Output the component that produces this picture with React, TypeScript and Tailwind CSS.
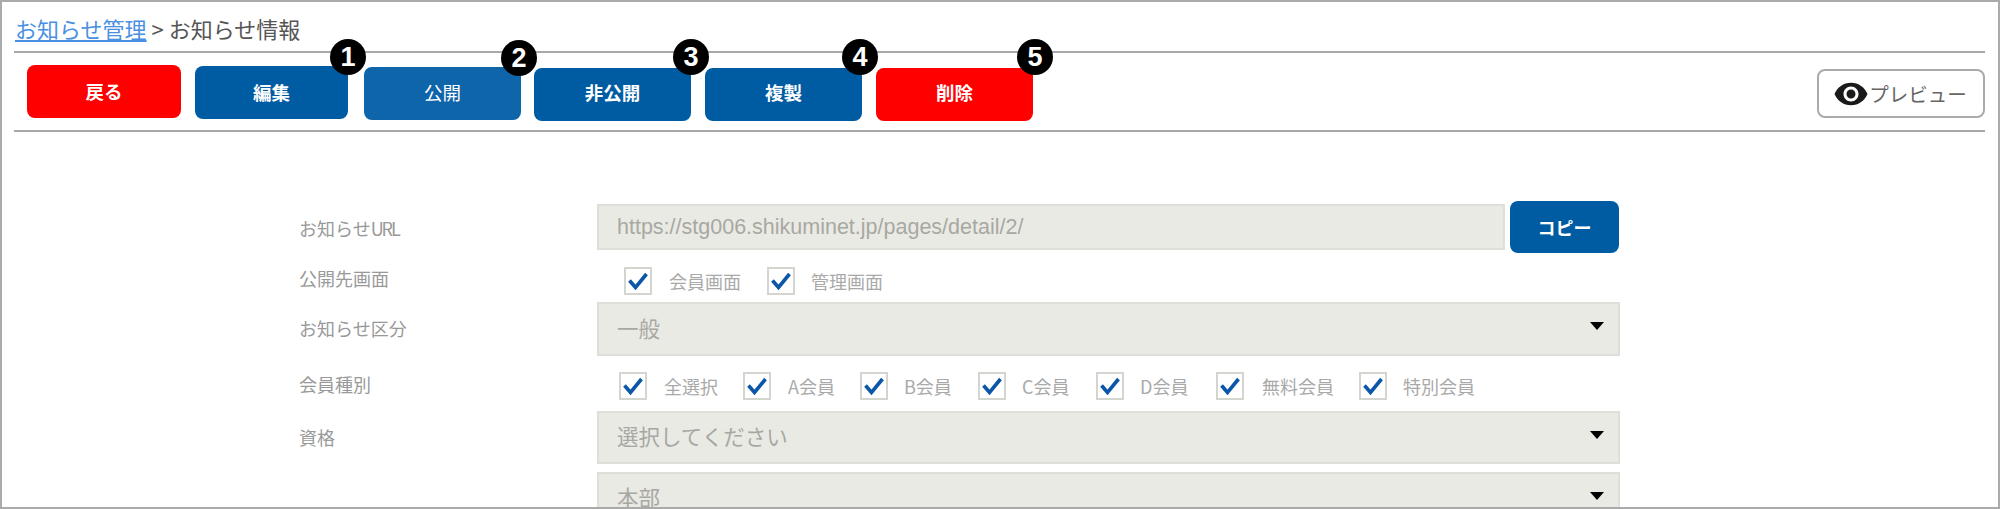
import { MdVisibility } from 'react-icons/md'

const jp = "font-['Noto_Sans_CJK_JP','Noto_Sans',sans-serif]"

function Badge({ n, pos }: { n: number; pos: string }) {
  return (
    <span className={`absolute w-9 h-9 rounded-full bg-black text-white text-[27px] leading-9 font-bold text-center font-['Liberation_Sans',sans-serif] ${pos}`}>
      {n}
    </span>
  )
}

type ActionProps = { label: string; color: string; box: string; n?: number; pos?: string }

function ActionButton({ label, color, box, n, pos = '' }: ActionProps) {
  return (
    <button className={`relative h-[53px] shrink-0 rounded-lg text-white text-[18.5px] font-bold ${color} ${box}`}>
      {label}
      {n ? <Badge n={n} pos={pos} /> : null}
    </button>
  )
}

function Check({ label, gap, width }: { label: string; gap: string; width: string }) {
  return (
    <label className={`flex items-center ${gap} ${width}`}>
      <span className="w-[28px] h-[28px] shrink-0 border-2 border-[#d5d5d0] bg-white flex items-center justify-center">
        <svg viewBox="0 0 24 24" className="w-[24px] h-[24px]" fill="none" stroke="#0b56a8" strokeWidth="3.6">
          <path d="M3.5 11.5 L9.5 18.5 L20.5 5" />
        </svg>
      </span>
      <span className="text-[18px] text-[#a9a9a9] whitespace-nowrap">{label}</span>
    </label>
  )
}

function SelectBox({ text, height, top, textBox }: { text: string; height: string; top: string; textBox: string }) {
  return (
    <div className={`w-[1023px] ${height} ${top} bg-[#eaeae4] border-2 border-[#dfdfd9] flex items-center justify-between pl-[18px] pr-[14px] shrink-0`}>
      <span className={`text-[21.5px] text-[#a8a8a3] ${textBox}`}>{text}</span>
      <span className="w-0 h-0 border-x-[7px] border-x-transparent border-t-[8px] border-t-black mb-[6px]" />
    </div>
  )
}

export default function App() {
  return (
    <div className={`h-[509px] border-2 border-[#aaaaaa] bg-white overflow-hidden pl-3 pr-3 ${jp}`}>
      <div className="h-[51px] border-b-2 border-[#a8a8a8] flex items-center pl-[1px] pt-[4px] text-[22px] text-[#555555] mr-[1px]">
        <a href="#" className="text-[#4a90e2] underline">お知らせ管理</a>
        <span className="ml-[5px]">&gt; お知らせ情報</span>
      </div>

      <div className="h-[79px] border-b-2 border-[#a8a8a8] flex items-start pl-[13px] mr-[1px]">
        <ActionButton label="戻る" color="bg-[#ff0000]" box="w-[154px] mt-[12px]" />
        <ActionButton label="編集" color="bg-[#005ca2]" box="w-[153px] mt-[13px] ml-[14px]" n={1} pos="-right-[18px] -top-[27px]" />
        <ActionButton label="公開" color="bg-[#0f65a9] font-normal pb-[1px]" box="w-[157px] mt-[14px] ml-[16px]" n={2} pos="-right-[16px] -top-[27px]" />
        <ActionButton label="非公開" color="bg-[#005ca2] pb-[3px]" box="w-[157px] mt-[15px] ml-[13px]" n={3} pos="-right-[18px] -top-[29px]" />
        <ActionButton label="複製" color="bg-[#005ca2] pb-[3px]" box="w-[157px] mt-[15px] ml-[14px]" n={4} pos="-right-[16px] -top-[29px]" />
        <ActionButton label="削除" color="bg-[#ff0000] pb-[3px]" box="w-[157px] mt-[15px] ml-[14px]" n={5} pos="-right-[20px] -top-[29px]" />
        <button className="ml-auto mt-[16px] w-[168px] h-[49px] rounded-lg border-2 border-[#aaaaaa] flex items-center justify-center text-[19.5px] text-[#666666] pr-[2px]">
          <MdVisibility size={36} className="text-[#1a1a1a]" />
          プレビュー
        </button>
      </div>

      <div className="flex mt-[69px] pl-[285px]">
        <div className="w-[298px] shrink-0 text-[18px] text-[#999999]">
          <div className="mt-[13px] h-[28px] leading-[28px]">
            お知らせ<span className="tracking-[-2px]">URL</span>
          </div>
          <div className="mt-[22px] h-[28px] leading-[28px]">公開先画面</div>
          <div className="mt-[22px] h-[28px] leading-[28px]">お知らせ区分</div>
          <div className="mt-[28px] h-[28px] leading-[28px]">会員種別</div>
          <div className="mt-[25px] h-[28px] leading-[28px]">資格</div>
          <div className="mt-[51px] h-[28px] leading-[28px]">職員区分</div>
        </div>

        <div className="flex flex-col">
          <div className="flex items-center gap-[5px] h-[52px]">
            <div className="w-[908px] h-[46px] bg-[#eaeae4] border-2 border-[#dfdfd9] flex items-center pl-[18px] pt-[1px] text-[21.5px] text-[#a8a8a3] font-['Liberation_Sans',sans-serif]">
              https://stg006.shikuminet.jp/pages/detail/2/
            </div>
            <button className="w-[109px] h-[52px] rounded-lg bg-[#005ca2] text-white text-[18px] font-bold">コピー</button>
          </div>

          <div className="flex mt-[14px] pl-[27px]">
            <Check label="会員画面" gap="gap-[17px]" width="w-[143px]" />
            <Check label="管理画面" gap="gap-[16px]" width="w-[120px]" />
          </div>

          <SelectBox text="一般" height="h-[54px]" top="mt-[7px]" textBox="mb-[2px]" />

          <div className="flex mt-[16px] pl-[22px]">
            <Check label="全選択" gap="gap-[17px]" width="w-[124px]" />
            <Check label="A会員" gap="gap-[17px]" width="w-[117px]" />
            <Check label="B会員" gap="gap-[16px]" width="w-[118px]" />
            <Check label="C会員" gap="gap-[16px]" width="w-[118px]" />
            <Check label="D会員" gap="gap-[16px]" width="w-[120px]" />
            <Check label="無料会員" gap="gap-[18px]" width="w-[143px]" />
            <Check label="特別会員" gap="gap-[16px]" width="w-[120px]" />
          </div>

          <SelectBox text="選択してください" height="h-[53px]" top="mt-[11px]" textBox="mb-[2px]" />
          <SelectBox text="本部" height="h-[54px]" top="mt-[8px]" textBox="mb-[4px]" />
        </div>
      </div>
    </div>
  )
}
